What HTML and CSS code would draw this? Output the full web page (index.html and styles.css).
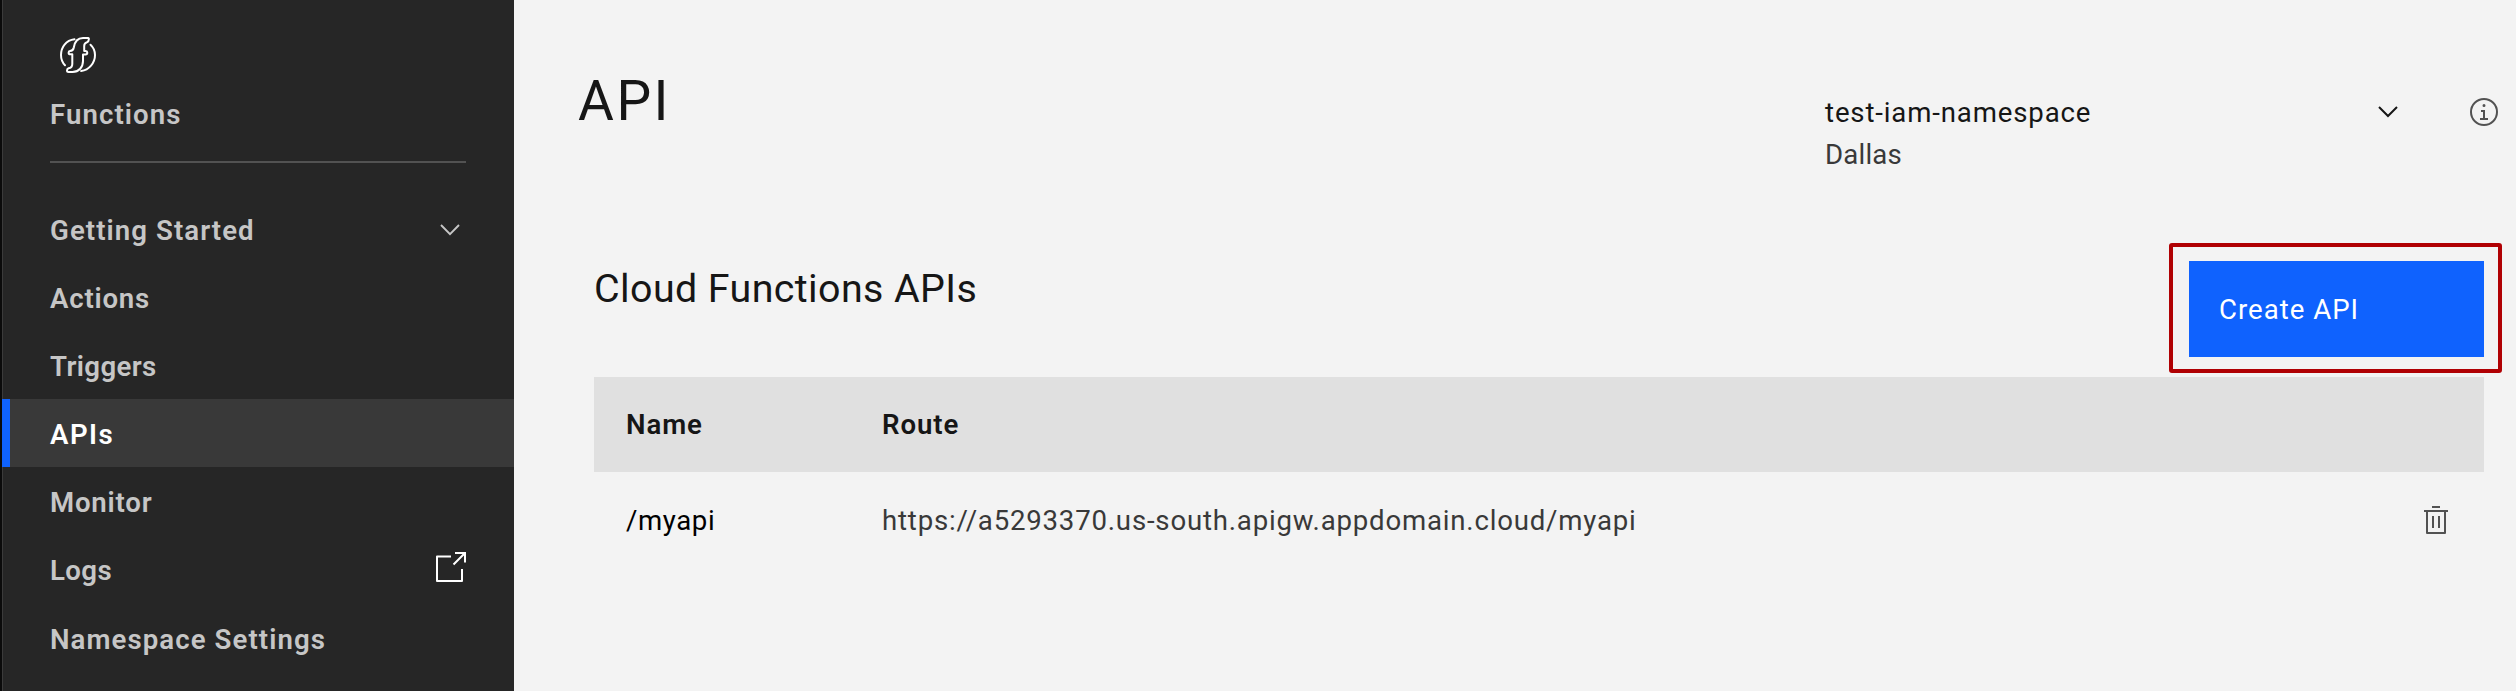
FILE: index.html
```html
<!DOCTYPE html>
<html lang="en">
<head>
<meta charset="utf-8">
<title>Functions - API</title>
<link rel="stylesheet" href="styles.css">
</head>
<body>
<div class="app">
  <nav class="sidebar">
    <header class="brand">
      <svg class="brand-logo" width="36" height="36" viewBox="0 0 36 36" fill="none" stroke="#fff" stroke-width="2" stroke-linecap="round" stroke-linejoin="round">
        <path d="M14.500 2.300C6 3.400 1 10 1 18c0 4 1.300 7.500 4 10.200"/>
        <path d="M30.500 7.700C33.500 10.500 35 14 35 18c0 8-6 15-13.800 16"/>
        <path d="M28.300 1H23C17 1 14.500 6 13.800 10.500C13.300 13 12 14 10 14Q8.600 14.200 8.600 15.700Q8.600 17.300 10.500 17.300H12.300V27C12.300 30 11 31 8.500 31.300Q7 31.800 7 33.500Q7 35 8.700 35H12.500C19 35 23 30 23 24V17.500H25.500Q27.300 17.300 27.300 15.700Q27.300 14.200 25.500 14H24.200V9C24.200 6.500 25 5.700 27 5.200Q28.800 4.500 28.800 2.500V1.500Z"/>
      </svg>
      <span class="brand-name">Functions</span>
    </header>
    <ul class="menu">
      <li class="item"><span>Getting Started</span>
        <svg class="menu-chevron" width="20" height="12" viewBox="0 0 20 12" fill="none" stroke="#c6c6c6" stroke-width="1.900"><path d="M1 1l9 9.200L19 1"/></svg></li>
      <li class="item"><span class="tight">Actions</span></li>
      <li class="item"><span class="tighter">Triggers</span></li>
      <li class="item active"><span class="loose">APIs</span></li>
      <li class="item"><span class="tight">Monitor</span></li>
      <li class="item"><span class="tighter">Logs</span>
        <svg class="launch" width="30" height="30" viewBox="0 0 30 30" fill="none" stroke="#fff" stroke-width="2"><path stroke-linejoin="round" d="M15 4.500H1V29H26V17"/><path d="M19 1H29V10.500M29 1L17.500 12.500"/></svg></li>
      <li class="item"><span>Namespace Settings</span></li>
    </ul>
  </nav>
  <main class="main">
    <header class="page-head">
      <h1 class="title">API</h1>
      <div class="namespace">
        <div class="ns-labels"><span class="ns-name">test-iam-namespace</span><span class="ns-region">Dallas</span></div>
        <svg class="ns-chevron" width="20" height="12" viewBox="0 0 20 12" fill="none" stroke="#161616" stroke-width="2"><path d="M1 1l9 9L19 1"/></svg>
        <svg class="info" width="32" height="32" viewBox="0 0 32 32" fill="#525252"><path d="M17 22V14H13V16H15V22H12V24H20V22ZM16 8a1.500 1.500 0 1 0 1.500 1.500A1.500 1.500 0 0 0 16 8Z"/><path d="M16 30A14 14 0 1 1 30 16 14 14 0 0 1 16 30ZM16 4A12 12 0 1 0 28 16 12 12 0 0 0 16 4Z"/></svg>
      </div>
    </header>
    <section class="content">
      <div class="toolbar">
        <h2 class="subtitle">Cloud Functions APIs</h2>
        <div class="highlight"><button class="create">Create API</button></div>
      </div>
      <div class="row row-head"><span>Name</span><span>Route</span></div>
      <div class="row row-body"><span class="api-name">/myapi</span><span class="api-url">https://a5293370.us-south.apigw.appdomain.cloud/myapi</span>
        <svg class="trash" width="24" height="28" viewBox="0 0 24 28" fill="none" stroke="#525252" stroke-width="2"><path d="M8 1h8M0 5h24M9 10v12M15 10v12"/><path stroke-linejoin="round" d="M3 5V27H21V5"/></svg></div>
    </section>
  </main>
</div>
</body>
</html>
```
FILE: styles.css
```css
* { box-sizing: border-box; }
body { margin: 0; font-family: Roboto, "Noto Sans", sans-serif; font-size: 27.6px; background: #f3f3f3; color: #161616; }
h1, h2 { margin: 0; font-weight: 400; }
svg { display: block; flex: none; }
.app { display: flex; height: 691px; overflow: hidden; }

.sidebar { width: 514px; flex: none; background: #262626; border-left: 2px solid #0b0b0b; color: #c6c6c6; font-weight: 600; box-shadow: inset 1px 0 #3b3b3b; letter-spacing: 1.080px; }
.brand { margin: 0 48px; height: 163px; padding: 37px 0 0 0; border-bottom: 2px solid #525252; }
.brand-logo { margin-left: 10px; }
.brand-name { display: block; margin-top: 24px; line-height: 36px; }
.menu { list-style: none; margin: 32px 0 0; padding: 0; }
.item { display: flex; align-items: center; justify-content: space-between; height: 68px; padding: 3px 48px 0; line-height: 36px; }
.item:last-child { padding-top: 5px; }
.item.active { background: #393939; color: #fff; box-shadow: inset 8px 0 #0f62fe; }
.tight { letter-spacing: .8px; }
.tighter { letter-spacing: .4px; }
.loose { letter-spacing: 1.500px; }
.menu-chevron { margin-right: 6px; margin-bottom: 2px; }
.launch { margin-bottom: 7px; }

.main { flex: 1; }
.page-head { display: flex; justify-content: space-between; height: 243px; padding: 66px 16px 0 64px; }
.title { font-size: 55px; line-height: 70px; letter-spacing: 2.500px; }
.namespace { display: flex; width: 675px; padding-top: 25px; }
.ns-labels { display: flex; flex-direction: column; line-height: 42px; flex: 1; padding-top: 1px; }
.ns-name { letter-spacing: .85px; }
.ns-region { color: #393939; letter-spacing: .2px; }
.ns-chevron { margin: 15px 70px 0 0; }
.info { margin-top: 5px; }

.content { padding: 0 32px 0 80px; }
.toolbar { display: flex; justify-content: space-between; height: 134px; }
.subtitle { font-size: 39.4px; line-height: 50px; padding-top: 21px; letter-spacing: .4px; }
.highlight { width: 333px; height: 130px; margin-right: -18px; padding: 14px 14px 12px 16px; border: 4px solid #b00003; border-radius: 3px; }
.create { display: block; width: 295px; height: 96px; border: 0; padding: 0 0 0 30px; background: #0f62fe; color: #fff; font: inherit; text-align: left; letter-spacing: 1px; }
.row { display: grid; grid-template-columns: 256px 1fr auto; align-items: center; padding: 0 36px 0 32px; height: 95px; }
.row-head { background: #e0e0e0; font-weight: 600; letter-spacing: .9px; }
.row-body { color: #000; }
.api-name, .api-url { padding-top: 2px; }
.api-name { letter-spacing: .6px; }
.api-url { color: #393939; letter-spacing: .8px; }
```
